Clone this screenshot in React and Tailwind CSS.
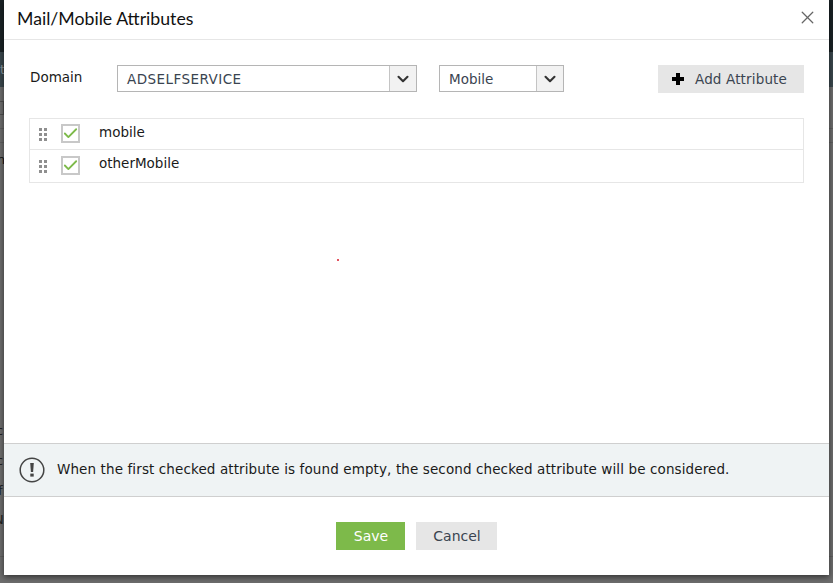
import { X, Check, ChevronDown } from 'lucide-react';

const attributes = ['mobile', 'otherMobile'];

function SelectBox({ value, width, spacing }) {
    return (
        <div className={`flex h-[27px] ${width} border border-[#b5b5b5] bg-white`}>
            <div className={`flex-1 pl-[9px] text-[13.5px] leading-[27px] text-[#3a4450] ${spacing}`}>{value}</div>
            <div className="flex w-[27px] items-center justify-center border-l border-[#c4c4c4] bg-[#f2f2f2]">
                <ChevronDown className="h-[18px] w-[18px] text-[#333]" strokeWidth={2.8} />
            </div>
        </div>
    );
}

function DragHandle() {
    return (
        <div className="grid w-[8px] grid-cols-2 gap-x-[2px] gap-y-[2px]">
            {[0, 1, 2, 3, 4, 5].map((i) => (
                <span key={i} className="h-[3px] w-[3px] bg-[#8f8f8f]"></span>
            ))}
        </div>
    );
}

export default function App() {
    return (
        <div className="relative h-[583px] w-[833px] overflow-hidden bg-[#6d6d6d] font-['DejaVu_Sans',sans-serif]">
            {/* dimmed page behind the dialog */}
            <div className="absolute inset-x-0 top-0 h-[52px] bg-[#1a2225]"></div>
            <div className="absolute inset-x-0 top-[52px] h-[35px] bg-[#3a474d]"></div>
            <div className="absolute inset-x-0 top-[128px] h-px bg-[#5f5f5f]"></div>
            <div className="absolute inset-x-0 top-[142px] h-px bg-[#5f5f5f]"></div>
            <div className="absolute inset-x-0 top-[556px] h-px bg-[#5f5f5f]"></div>
            <div className="absolute left-[-8px] top-[101px] h-[14px] w-[12px] border border-[#4f4f4f]"></div>
            <div className="absolute left-0 top-[60px] text-[13px] text-[#8a9599]">t</div>
            <div className="absolute left-[-3px] top-[150px] text-[13px] text-[#111]">n</div>
            <div className="absolute left-[-4px] top-[421px] text-[13px] text-[#222]">c</div>
            <div className="absolute left-[-4px] top-[451px] text-[13px] text-[#222]">c</div>
            <div className="absolute left-[-2px] top-[481px] text-[13px] text-[#222]">f</div>
            <div className="absolute left-[-6px] top-[510px] text-[13px] text-[#222]">N</div>

            <div className="absolute left-[4px] top-0 flex h-[575px] w-[825px] flex-col bg-white shadow-[0_2px_6px_rgba(0,0,0,0.55)]">
                <div className="flex h-[40px] shrink-0 items-center justify-between border-b border-[#e6e6e6] pl-[13px] pr-[11px]">
                    <h1 className="-mt-[1px] font-['Lato',sans-serif] text-[17.7px] text-[#111]">Mail/Mobile Attributes</h1>
                    <X className="-mt-[5px] h-[21px] w-[21px] text-[#666]" strokeWidth={1.5} />
                </div>

                <div className="flex items-start pl-[26px] pr-[25px] pt-[25px]">
                    <div className="w-[87px] text-[13.5px] leading-[25px] text-[#1a1a1a]">Domain</div>
                    <SelectBox value="ADSELFSERVICE" width="w-[300px]" spacing="tracking-[0.45px]" />
                    <div className="ml-[22px]">
                        <SelectBox value="Mobile" width="w-[125px]" spacing="" />
                    </div>
                    <button className="ml-auto flex h-[28px] w-[146px] items-center gap-[11px] bg-[#e6e6e6] pl-[14px] text-[13.5px] tracking-[0.15px] text-[#3a4450]">
                        <span className="relative h-[12px] w-[12px] shrink-0">
                            <span className="absolute left-[4px] top-0 h-[12px] w-[4px] bg-black"></span>
                            <span className="absolute left-0 top-[4px] h-[4px] w-[12px] bg-black"></span>
                        </span>
                        Add Attribute
                    </button>
                </div>

                <div className="ml-[25px] mr-[25px] mt-[25px] border border-[#e6e6e6]">
                    {attributes.map((name, i) => (
                        <div key={name} className={`flex items-center pl-[9px] ${i === 0 ? 'h-[31px] border-b border-[#e6e6e6]' : 'h-[32px]'}`}>
                            <DragHandle />
                            <div className="-mt-[1px] ml-[14px] flex h-[19px] w-[19px] items-center justify-center border-2 border-[#c8c8c8]">
                                <Check className="h-[17px] w-[17px] shrink-0 text-[#7dba4a]" strokeWidth={2.6} />
                            </div>
                            <span className={`ml-[19px] text-[13.5px] text-[#1a1a1a] ${i === 0 ? '-mt-[3px]' : '-mt-[5px]'}`}>{name}</span>
                        </div>
                    ))}
                </div>

                <div className="mt-auto flex h-[54px] items-center border-y border-[#cfcfcf] bg-[#eff3f4] pl-[15px]">
                    <svg width="26" height="26" viewBox="0 0 26 26" className="shrink-0">
                        <circle cx="13" cy="13" r="11.8" fill="none" stroke="#444" strokeWidth="1.5" />
                        <path d="M11.2 6h3.6l-.7 9h-2.2z" fill="#444" />
                        <rect x="11.3" y="16.6" width="3.4" height="3" fill="#444" />
                    </svg>
                    <p className="-mt-[2px] ml-[12px] text-[13.5px] tracking-[0.11px] text-[#1a1a1a]">When the first checked attribute is found empty, the second checked attribute will be considered.</p>
                </div>

                <div className="flex h-[78px] shrink-0 justify-center gap-[11px] pt-[25px]">
                    <button className="h-[28px] w-[69px] bg-[#7dba4a] pl-px text-[14px] text-white">Save</button>
                    <button className="h-[28px] w-[81px] bg-[#e6e6e6] pl-px text-[14px] text-[#3a4450]">Cancel</button>
                </div>

                <span className="absolute left-[333px] top-[259px] h-[2px] w-[2px] bg-[#e2525f]"></span>
            </div>
        </div>
    );
}
